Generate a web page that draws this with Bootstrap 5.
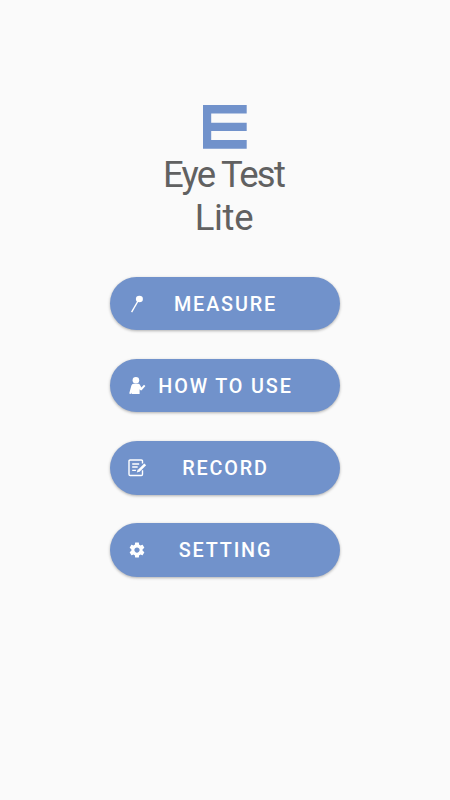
<!DOCTYPE html>
<html lang="en">
<head>
<meta charset="utf-8">
<meta name="viewport" content="width=device-width, initial-scale=1">
<title>Eye Test Lite</title>
<link rel="stylesheet" href="https://cdn.jsdelivr.net/npm/bootstrap@5.3.0/dist/css/bootstrap.min.css">
<style>
body{background:#fafafa;font-family:Roboto,"Liberation Sans",sans-serif;min-height:100vh}
.home{padding-top:105px}
.logo{width:44px;height:44px}
.title{font-size:36.5px;line-height:43px;font-weight:400;color:#616161;margin-top:4px}
.title-top{letter-spacing:-1.75px;padding-right:3px}
.title-sub{letter-spacing:-.35px;padding-right:2px}
.actions{width:230px;margin-top:38px;gap:28.7px}
.action{height:53.4px;background:#7192cb;color:#fff;font-size:19.8px;font-weight:500;letter-spacing:1.85px;box-shadow:0 1px 3px rgba(0,0,0,.3);padding:0 0 0 18px}
.action:hover{background:#6484bf;color:#fff}
.glyph{width:18px;height:18px;overflow:visible}
.caption{padding:2px 35px 0 0;white-space:nowrap}
</style>
</head>
<body>
<main class="home d-flex flex-column align-items-center">
<svg class="logo" viewBox="0 0 44 44" fill="#7192cb"><path d="M0 0h43.7v8.4H8.2v9.4h35.5v8.3H8.2V35h35.5v8.7H0z"/></svg>
<h1 class="title text-center mb-0"><span class="title-top d-block">Eye Test</span><span class="title-sub d-block">Lite</span></h1>
<nav class="actions d-flex flex-column">
<button class="action btn border-0 rounded-pill d-flex align-items-center" type="button"><svg class="glyph" viewBox="0 0 18 18"><ellipse cx="11.4" cy="4" rx="3.5" ry="3.2" fill="#fff"/><path d="M10.3 5.5L3.6 17.2" stroke="#fff" stroke-width="1.4"/></svg><span class="caption flex-fill">MEASURE</span></button>
<button class="action btn border-0 rounded-pill d-flex align-items-center" type="button"><svg class="glyph" viewBox="0 0 18 18" fill="#fff"><circle cx="7.900" cy="3.300" r="3.300"/><path d="M5.500 6.800h4.800q1.200 0 1.700 1.200l1.400 2.400 2.600-2.700 1.400 1.200-3.500 4.100q-.8.8-1.700-.1l-.6-.7V17H3.600v-1.500L2.800 17l-1.600-.6L3.400 8.600Q4 6.800 5.500 6.800z"/></svg><span class="caption flex-fill">HOW TO USE</span></button>
<button class="action btn border-0 rounded-pill d-flex align-items-center" type="button"><svg class="glyph" viewBox="0 0 18 18" fill="none" stroke="#fff"><path d="M14.500 4.500V2.200Q14.500 1 13.300 1H2.200Q1 1 1 2.200v13.100q0 1.200 1.200 1.200h11.100q1.200 0 1.200-1.200v-4" stroke-width="1.400"/><path d="M4.200 5h7M4.200 8h5.500M4.200 11.300h3.700" stroke-width="1.300"/><path d="M10.700 11.800l6.500-6.500" stroke-width="2.600"/><path d="M8.800 13.500l.9-3.100 2.200 2.200z" fill="#fff" stroke="none"/></svg><span class="caption flex-fill">RECORD</span></button>
<button class="action btn border-0 rounded-pill d-flex align-items-center" type="button"><svg class="glyph" viewBox="0 0 24 24" fill="#fff"><path d="M19.430 12.980c.04-.32.07-.64.07-.98s-.03-.66-.07-.98l2.110-1.650c.19-.15.24-.42.12-.64l-2-3.460c-.12-.22-.39-.3-.61-.22l-2.490 1c-.52-.4-1.080-.73-1.690-.98l-.38-2.650C14.460 2.180 14.250 2 14 2h-4c-.25 0-.46.18-.49.42l-.38 2.650c-.61.25-1.170.59-1.690.98l-2.490-1c-.23-.09-.49 0-.61.22l-2 3.460c-.13.22-.07.49.12.64l2.110 1.650c-.04.32-.07.65-.07.98s.03.66.07.98l-2.110 1.650c-.19.15-.24.42-.12.64l2 3.460c.12.22.39.3.61.22l2.490-1c.52.4 1.080.73 1.690.98l.38 2.650c.03.24.24.42.49.42h4c.25 0 .46-.18.49-.42l.38-2.650c.61-.25 1.170-.59 1.690-.98l2.490 1c.23.09.49 0 .61-.22l2-3.460c.12-.22.07-.49-.12-.64l-2.110-1.650zM12 15.500c-1.930 0-3.500-1.570-3.500-3.500s1.570-3.500 3.500-3.500 3.500 1.570 3.500 3.500-1.570 3.500-3.500 3.500z"/></svg><span class="caption flex-fill">SETTING</span></button>
</nav>
</main>
<script src="https://cdn.jsdelivr.net/npm/bootstrap@5.3.0/dist/js/bootstrap.bundle.min.js"></script>
</body>
</html>
